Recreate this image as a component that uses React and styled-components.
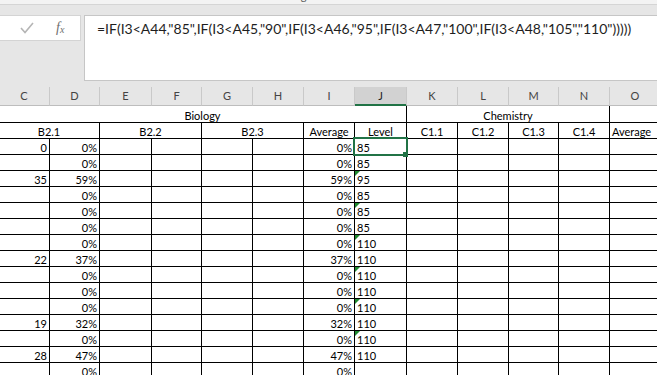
import React from "react";
import styled, { createGlobalStyle, css } from "styled-components";

const GlobalStyle = createGlobalStyle`
  html, body { margin: 0; padding: 0; background: #ffffff; }
  body { width: 657px; height: 375px; overflow: hidden; font-family: Lato, "Liberation Sans", sans-serif; }
`;

const COLS = [51, 50, 52, 50, 51, 51, 51, 52, 51, 51, 50, 51, 51];
const LETTERS = ["C", "D", "E", "F", "G", "H", "I", "J", "K", "L", "M", "N", "O"];
const TEMPLATE = COLS.map((w) => `${w}px`).join(" ");

const Screen = styled.div`
  width: 657px;
  height: 375px;
  overflow: hidden;
  display: flex;
  flex-direction: column;
  background: #ffffff;
`;

const RibbonEdge = styled.div`
  flex: none;
  height: 4px;
  background: #f3f3f3;
  border-bottom: 1px solid #d5d5d5;
  overflow: hidden;
  display: flex;
  padding-left: 288px;
`;

const RibbonLabel = styled.span`
  font-size: 11px;
  line-height: 11px;
  margin-top: -10px;
  color: #5a5a5a;
  white-space: nowrap;
`;

const FormulaArea = styled.div`
  flex: none;
  height: 82px;
  box-sizing: border-box;
  background: #e6e6e6;
  padding: 10px 0 6px;
  display: flex;
  align-items: flex-start;
  gap: 3px;
`;

const ButtonBox = styled.div`
  flex: none;
  width: 81px;
  height: 26px;
  box-sizing: border-box;
  background: #ffffff;
  border: 1px solid #d4d4d4;
  border-left: none;
  display: flex;
  align-items: center;
  padding-left: 20px;
`;

const Fx = styled.span`
  margin-left: 22px;
  font-family: "Liberation Serif", "DejaVu Serif", serif;
  font-style: italic;
  font-size: 14px;
  color: #6f6f6f;
  line-height: 1;
  sub {
    font-size: 10px;
    vertical-align: -1px;
  }
`;

const FormulaBox = styled.div`
  flex: 1;
  height: 66px;
  box-sizing: border-box;
  background: #ffffff;
  border: 1px solid #c6c6c6;
  border-right: none;
  padding: 5px 0 0 12px;
  font-family: Lato, "Liberation Sans", sans-serif;
  font-size: 14px;
  line-height: 16px;
  color: #1e1e1e;
  white-space: nowrap;
  overflow: hidden;
`;

const HeaderRow = styled.div`
  flex: none;
  display: grid;
  grid-template-columns: ${TEMPLATE};
  margin-left: -1px;
  height: 19px;
  background: #e6e6e6;
`;

const ColumnHead = styled.div`
  box-sizing: border-box;
  border-right: 1px solid #c9c9c9;
  border-bottom: 1px solid #bdbdbd;
  text-align: center;
  font-size: 11px;
  line-height: 18px;
  color: #444444;
  ${(p) =>
    p.$active &&
    css`
      background: #d2d2d2;
      color: #1d1d1d;
      border-bottom-color: #217346;
      box-shadow: inset 0 -1px 0 #217346;
    `}
`;

const Sheet = styled.div`
  flex: none;
  display: grid;
  grid-template-columns: ${TEMPLATE};
  grid-template-rows: 17px;
  grid-auto-rows: 16px;
  margin-left: -1px;
`;

const Cell = styled.div`
  position: relative;
  box-sizing: border-box;
  border-right: 1px solid #000000;
  border-bottom: 1px solid #000000;
  grid-column: span ${(p) => p.$span || 1};
  display: flex;
  align-items: flex-end;
  justify-content: ${(p) =>
    p.$align === "right" ? "flex-end" : p.$align === "left" ? "flex-start" : "center"};
  padding: 0 2px;
  font-size: 11px;
  line-height: 12px;
  color: #000000;
  white-space: nowrap;
  ${(p) =>
    p.$flag &&
    css`
      &::before {
        content: "";
        position: absolute;
        left: 0;
        top: 0;
        border-top: 5px solid #1f8a2f;
        border-right: 5px solid transparent;
      }
    `}
  ${(p) =>
    p.$selected &&
    css`
      z-index: 2;
      &::after {
        content: "";
        position: absolute;
        left: -2px;
        top: -2px;
        right: -2px;
        bottom: -2px;
        border: 2px solid #217346;
      }
      &::before {
        content: "";
        position: absolute;
        width: 5px;
        height: 5px;
        right: -2px;
        bottom: -3px;
        background: #217346;
        z-index: 3;
      }
    `}
`;

const rows = [
  { c: "0", d: "0%", i: "0%", j: "85", selected: true },
  { d: "0%", i: "0%", j: "85" },
  { c: "35", d: "59%", i: "59%", j: "95", flag: true },
  { d: "0%", i: "0%", j: "85" },
  { d: "0%", i: "0%", j: "85", flag: true },
  { d: "0%", i: "0%", j: "85" },
  { d: "0%", i: "0%", j: "110", flag: true },
  { c: "22", d: "37%", i: "37%", j: "110" },
  { d: "0%", i: "0%", j: "110", flag: true },
  { d: "0%", i: "0%", j: "110" },
  { d: "0%", i: "0%", j: "110", flag: true },
  { c: "19", d: "32%", i: "32%", j: "110" },
  { d: "0%", i: "0%", j: "110", flag: true },
  { c: "28", d: "47%", i: "47%", j: "110" },
  { d: "0%", i: "0%", j: "" },
];

const FORMULA = '=IF(I3<A44,"85",IF(I3<A45,"90",IF(I3<A46,"95",IF(I3<A47,"100",IF(I3<A48,"105","110")))))';

function DataRow({ row }) {
  return (
    <>
      <Cell $align="right">{row.c || ""}</Cell>
      <Cell $align="right">{row.d || ""}</Cell>
      <Cell />
      <Cell />
      <Cell />
      <Cell />
      <Cell $align="right">{row.i || ""}</Cell>
      <Cell $align="left" $flag={row.flag} $selected={row.selected}>
        {row.j}
      </Cell>
      <Cell />
      <Cell />
      <Cell />
      <Cell />
      <Cell />
    </>
  );
}

export default function App() {
  return (
    <>
      <GlobalStyle />
      <Screen>
        <RibbonEdge>
          <RibbonLabel>Alignment</RibbonLabel>
        </RibbonEdge>
        <FormulaArea>
          <ButtonBox>
            <svg width="14" height="12" viewBox="0 0 14 12">
              <polyline points="1,6 5,10.5 13,1" fill="none" stroke="#b5b5b5" strokeWidth="1.6" />
            </svg>
            <Fx>
              f<sub>x</sub>
            </Fx>
          </ButtonBox>
          <FormulaBox>{FORMULA}</FormulaBox>
        </FormulaArea>
        <HeaderRow>
          {LETTERS.map((l) => (
            <ColumnHead key={l} $active={l === "J"}>
              {l}
            </ColumnHead>
          ))}
        </HeaderRow>
        <Sheet>
          <Cell $span={8}>Biology</Cell>
          <Cell $span={4}>Chemistry</Cell>
          <Cell />
          <Cell $span={2}>B2.1</Cell>
          <Cell $span={2}>B2.2</Cell>
          <Cell $span={2}>B2.3</Cell>
          <Cell>Average</Cell>
          <Cell>Level</Cell>
          <Cell>C1.1</Cell>
          <Cell>C1.2</Cell>
          <Cell>C1.3</Cell>
          <Cell>C1.4</Cell>
          <Cell $align="left">Average</Cell>
          {rows.map((r, k) => (
            <DataRow key={k} row={r} />
          ))}
        </Sheet>
      </Screen>
    </>
  );
}
